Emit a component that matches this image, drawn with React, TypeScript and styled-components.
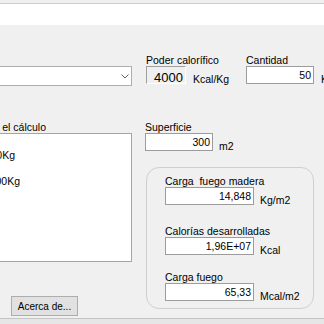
import React from "react";
import styled, { createGlobalStyle } from "styled-components";

const GlobalStyle = createGlobalStyle`
  html, body {
    margin: 0;
    padding: 0;
    background: #f0f0f0;
  }
  body {
    font-family: "Liberation Sans", Arial, sans-serif;
    font-size: 10.5px;
    color: #000;
  }
`;

const Screen = styled.div`
  width: 324px;
  height: 324px;
  overflow: hidden;
  display: flex;
  flex-direction: column;
  background: #f0f0f0;
`;

const TitleEdge = styled.div`
  flex: none;
  height: 3px;
  background: #efefef;
  border-bottom: 1px solid #cdcdcd;
`;

const MenuBand = styled.div`
  flex: none;
  height: 21px;
  background: #ffffff;
`;

const Body = styled.div`
  flex: none;
  height: 293px;
  display: flex;
`;

const Footer = styled.div`
  flex: 1;
  border-top: 1px solid #c4c4c4;
  background: #e6e6e6;
`;

const LeftCol = styled.div`
  flex: none;
  width: 132px;
  display: flex;
  flex-direction: column;
`;

const RightCol = styled.div`
  flex: none;
  width: 200px;
  margin-left: 14px;
  display: flex;
  flex-direction: column;
`;

const Combo = styled.div`
  margin-top: 41px;
  height: 20px;
  box-sizing: border-box;
  background: #fff;
  border: 1px solid #adadad;
  border-left: none;
  display: flex;
  align-items: center;
  justify-content: flex-end;
  padding-right: 2px;
`;

// text whose start lies off the left edge of the window
const ClipText = styled.div<{ $end: number }>`
  width: ${(p) => p.$end}px;
  height: 12px;
  line-height: 12px;
  overflow: hidden;
  white-space: nowrap;
  display: flex;
  justify-content: flex-end;
`;

const Caption = styled(ClipText)`
  margin-top: 35px;
`;

const ListBox = styled.div`
  height: 129px;
  box-sizing: border-box;
  background: #fff;
  border: 1px solid #a5a5a5;
  border-left: none;
  padding-top: 15px;
  display: flex;
  flex-direction: column;
  gap: 14px;
`;

const AboutButton = styled.div`
  margin: 34px 0 0 11px;
  width: 67px;
  height: 20px;
  box-sizing: border-box;
  background: #e1e1e1;
  border: 1px solid #adadad;
  font-size: 10px;
  display: flex;
  align-items: center;
  justify-content: center;
`;

const TopRow = styled.div`
  margin-top: 29px;
  display: flex;
`;

const Field = styled.div<{ $w?: number; $top?: number; $left?: number }>`
  display: flex;
  flex-direction: column;
  flex: none;
  width: ${(p) => (p.$w ? `${p.$w}px` : "auto")};
  margin-top: ${(p) => p.$top ?? 0}px;
  margin-left: ${(p) => p.$left ?? 0}px;
`;

const Label = styled.div`
  height: 12px;
  line-height: 12px;
  white-space: pre;
`;

const InputRow = styled.div`
  display: flex;
  align-items: flex-end;
`;

const TextBox = styled.div<{ $w: number }>`
  flex: none;
  width: ${(p) => p.$w}px;
  height: 18px;
  box-sizing: border-box;
  background: #fff;
  border: 1px solid #9c9c9c;
  padding-right: 2px;
  line-height: 16px;
  display: flex;
  justify-content: flex-end;
`;

const ReadOnlyBox = styled(TextBox)`
  background: #f0f0f0;
  border-color: #a0a0a0 #ffffff #ffffff #a0a0a0;
  font-size: 13px;
  line-height: 13px;
  padding-top: 4px;
  padding-right: 2px;
`;

const Unit = styled.span<{ $gap?: number }>`
  margin-left: ${(p) => p.$gap ?? 6}px;
  margin-bottom: -1px;
  line-height: 12px;
  white-space: nowrap;
`;

const Group = styled.div`
  margin-top: 16px;
  width: 168px;
  height: 142px;
  box-sizing: border-box;
  border: 1px solid #cfcfcf;
  border-radius: 13px;
  padding: 7px 0 0 18px;
  display: flex;
  flex-direction: column;
`;

function Chevron() {
  return (
    <svg width="8" height="5" viewBox="0 0 8 5">
      <polyline
        points="0.5,0.5 4,4 7.5,0.5"
        fill="none"
        stroke="#606060"
        strokeWidth="1"
      />
    </svg>
  );
}

export default function App() {
  return (
    <Screen>
      <GlobalStyle />
      <TitleEdge />
      <MenuBand />
      <Body>
        <LeftCol>
          <Combo>
            <Chevron />
          </Combo>
          <Caption $end={46}>Datos para el cálculo</Caption>
          <ListBox>
            <ClipText $end={15}>Madera 1000Kg</ClipText>
            <ClipText $end={20}>Papel 2000Kg</ClipText>
          </ListBox>
          <AboutButton>Acerca de...</AboutButton>
        </LeftCol>

        <RightCol>
          <TopRow>
            <Field $w={100}>
              <Label>Poder calorífico</Label>
              <InputRow>
                <ReadOnlyBox $w={40}>4000</ReadOnlyBox>
                <Unit $gap={7}>Kcal/Kg</Unit>
              </InputRow>
            </Field>
            <Field>
              <Label>Cantidad</Label>
              <InputRow>
                <TextBox $w={68}>50</TextBox>
                <Unit $gap={7}>Kg</Unit>
              </InputRow>
            </Field>
          </TopRow>

          <Field $top={37} $left={-1}>
            <Label>Superficie</Label>
            <InputRow>
              <TextBox $w={68}>300</TextBox>
              <Unit>m2</Unit>
            </InputRow>
          </Field>

          <Group>
            <Field>
              <Label>Carga  fuego madera</Label>
              <InputRow>
                <TextBox $w={89}>14,848</TextBox>
                <Unit>Kg/m2</Unit>
              </InputRow>
            </Field>
            <Field $top={20}>
              <Label>Calorías desarrolladas</Label>
              <InputRow>
                <TextBox $w={89}>1,96E+07</TextBox>
                <Unit>Kcal</Unit>
              </InputRow>
            </Field>
            <Field $top={16}>
              <Label>Carga fuego</Label>
              <InputRow>
                <TextBox $w={89}>65,33</TextBox>
                <Unit>Mcal/m2</Unit>
              </InputRow>
            </Field>
          </Group>
        </RightCol>
      </Body>
      <Footer />
    </Screen>
  );
}
